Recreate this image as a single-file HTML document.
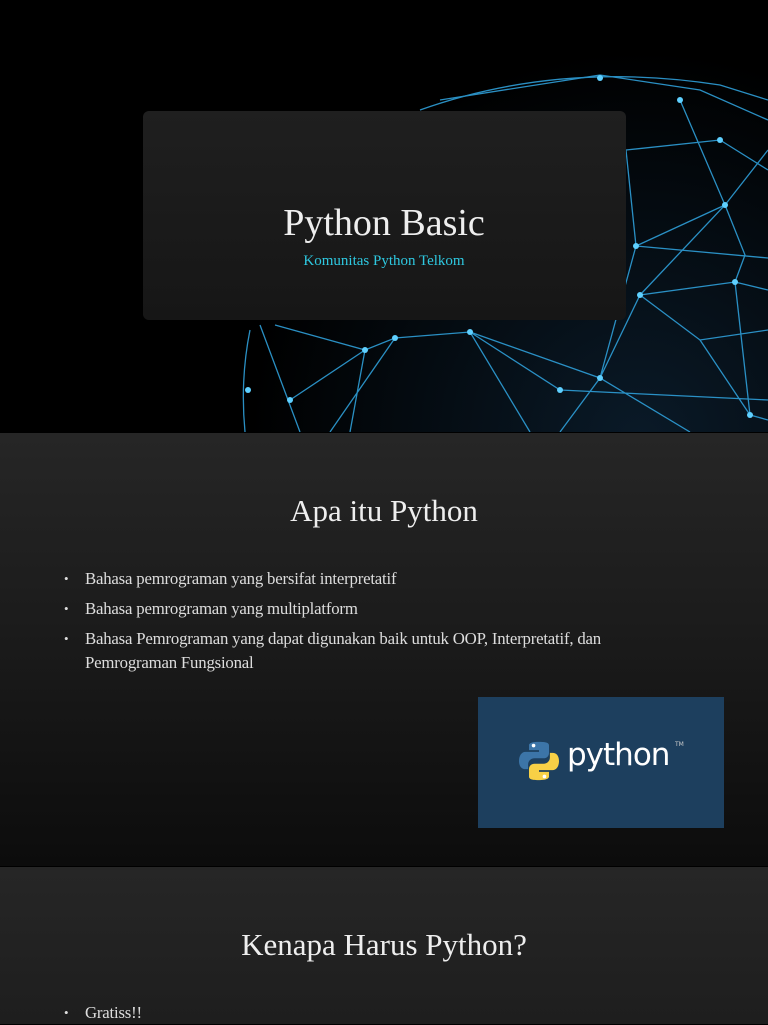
<!DOCTYPE html>
<html><head><meta charset="utf-8"><style>
body{margin:0;width:768px;height:1024px;overflow:hidden;background:#000;font-family:"Liberation Serif",serif;}
.s1{position:absolute;left:0;top:0;width:768px;height:432px;background:#000;overflow:hidden}
.card{position:absolute;left:143px;top:111px;width:483px;height:209px;background:linear-gradient(#1f1f1f,#161616);border-radius:6px;}
.s2{position:absolute;left:0;top:433px;width:768px;height:433px;background:linear-gradient(#262626,#1a1a1a 50%,#0c0c0c);}
.s3{position:absolute;left:0;top:867px;width:768px;height:157px;background:linear-gradient(#262626,#1e1e1e);}
.t{position:absolute;color:#eee;white-space:nowrap}
.b{position:absolute;left:85px;color:#ddd;font-size:16.8px;line-height:24px;letter-spacing:-0.2px}
.b:before{content:"•";position:absolute;left:-21px;font-size:13px}
</style></head><body>
<div class="s1">
<svg width="768" height="432" style="position:absolute;left:0;top:0">
<defs><radialGradient id="g"><stop offset="0" stop-color="#0a1a28"/><stop offset="1" stop-color="#000"/></radialGradient></defs>
<circle cx="640" cy="440" r="390" fill="url(#g)"/>
<g stroke="#2f9fd8" stroke-width="1.3" fill="none" opacity="0.9">
<path d="M420 110 Q560 60 720 85 L768 100"/>
<path d="M440 100 L600 75 L700 90 L768 120"/>
<path d="M250 330 Q240 380 245 432"/>
<path d="M260 325 L300 432 M275 325 L365 350 L350 432 M365 350 L395 338 L470 332 L530 432 M470 332 L600 378 L690 432 M600 378 L640 295 L735 282 L768 290 M640 295 L725 205 L768 150 M640 295 L700 340 L768 330 M735 282 L750 415 L768 420 M725 205 L745 255 L735 282 M636 246 L725 205 M636 246 L600 378 M636 246 L768 258 M560 390 L768 400 M560 390 L470 332 M395 338 L330 432 M290 400 L365 350 M626 150 L720 140 L768 170 M626 150 L636 246 M700 340 L750 415 M600 378 L560 432 M680 100 L725 205"/>
</g>
<g fill="#5fd0ff">
<circle cx="640" cy="295" r="3"/><circle cx="735" cy="282" r="3"/><circle cx="725" cy="205" r="3"/><circle cx="636" cy="246" r="3"/><circle cx="600" cy="378" r="3"/><circle cx="470" cy="332" r="3"/><circle cx="365" cy="350" r="3"/><circle cx="395" cy="338" r="3"/><circle cx="560" cy="390" r="3"/><circle cx="750" cy="415" r="3"/><circle cx="290" cy="400" r="3"/><circle cx="600" cy="78" r="3"/><circle cx="680" cy="100" r="3"/><circle cx="720" cy="140" r="3"/><circle cx="248" cy="390" r="3"/>
</g>
</svg>
<div class="card"></div>
<div class="t" style="left:0;width:768px;text-align:center;top:201px;font-size:38px;color:#eee">Python Basic</div>
<div class="t" style="left:0;width:768px;text-align:center;top:253px;font-size:15px;color:#2ec8e0">Komunitas Python Telkom</div>
</div>
<div class="s2">
<div class="t" style="left:0;width:768px;text-align:center;top:60px;font-size:31px">Apa itu Python</div>
<div class="b" style="top:134px">Bahasa pemrograman yang bersifat interpretatif</div>
<div class="b" style="top:164px">Bahasa pemrograman yang multiplatform</div>
<div class="b" style="top:194px;width:560px">Bahasa Pemrograman yang dapat digunakan baik untuk OOP, Interpretatif, dan Pemrograman Fungsional</div>
<div style="position:absolute;left:478px;top:264px;width:246px;height:131px;background:#1d3f5e">
<svg width="40" height="42" viewBox="0 0 44 46" style="position:absolute;left:41px;top:43px">
<path d="M21 2C10 2 11 6 11 6V11H22V13H7C3 13 0 17 0 23C0 29 3 32 7 32H10V27C10 23 13 20 17 20H27C30 20 33 18 33 14V6C33 3 30 2 21 2Z" fill="#3c75a8"/>
<path d="M23 44C34 44 33 40 33 40V35H22V33H37C41 33 44 29 44 23C44 17 41 14 37 14H34V19C34 23 31 26 27 26H17C14 26 11 28 11 32V40C11 43 14 44 23 44Z" fill="#f7d046"/>
<circle cx="16" cy="6" r="2" fill="#fff"/><circle cx="28" cy="40" r="2" fill="#fff"/>
</svg>
<div style="position:absolute;left:89px;top:40px;font-family:'DejaVu Sans',sans-serif;font-size:31px;color:#fff;letter-spacing:-1px">python</div>
<div style="position:absolute;left:197px;top:44px;font-family:'DejaVu Sans',sans-serif;font-size:6px;color:#ccc">TM</div>
</div>
</div>
<div class="s3">
<div class="t" style="left:0;width:768px;text-align:center;top:60px;font-size:31px">Kenapa Harus Python?</div>
<div class="b" style="top:134px">Gratiss!!</div>
</div>
</body></html>
